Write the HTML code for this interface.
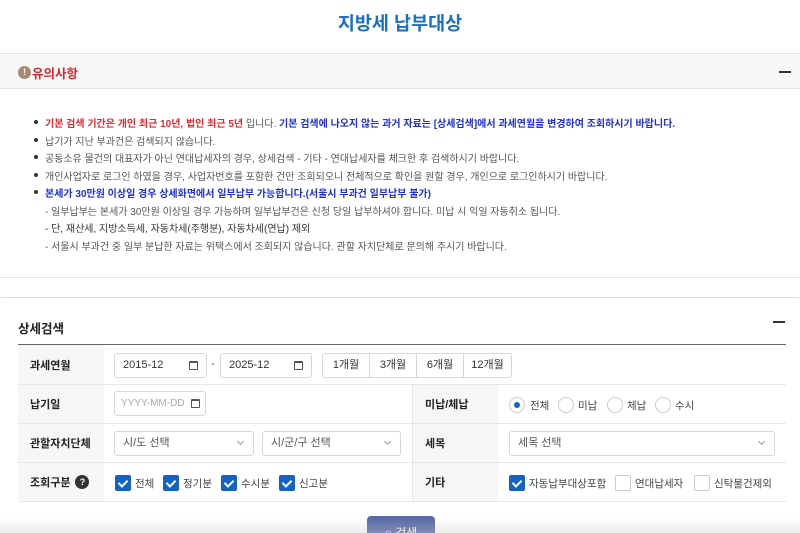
<!DOCTYPE html>
<html><head><meta charset="utf-8"><style>
*{box-sizing:border-box;margin:0;padding:0}
html,body{width:800px;height:533px;overflow:hidden}
body{background:#fff;font-family:"Liberation Sans","Noto Sans CJK KR",sans-serif;color:#333;position:relative}
.abs{position:absolute}
h1{position:absolute;top:10px;left:0;width:800px;text-align:center;font-size:18.5px;color:#1a6fc4;font-weight:bold}
.notice{left:-2px;top:53px;width:804px;height:225px;border:1px solid #e3e3e3;border-radius:4px}
.nh{height:35px;background:#f8f8f9;border-bottom:1px solid #e3e3e3;position:relative}
.nh span{position:absolute;left:33px;top:9px;font-size:12.5px;font-weight:bold;color:#d9232d}
.warn{position:absolute;left:19px;top:12px;width:13px;height:13px;border-radius:50%;background:#a88a6e;color:#fff;font-size:9px;font-weight:bold;text-align:center;line-height:13px}
.minus{position:absolute;right:10px;width:12px;height:1.5px;background:#333}
.ln{position:absolute;left:45px;font-size:10px;white-space:nowrap;color:#555}
.dot{position:absolute;left:-11px;top:5px;width:4px;height:4px;border-radius:50%;background:#333}
.red{color:#e8262e;font-weight:bold}.blue{color:#1f2fd6;font-weight:bold}
.det{left:-2px;top:297px;width:804px;height:260px;border:1px solid #ddd;border-radius:5px}
.tbl{left:18px;top:344px;width:768px;height:157px;border-top:1.5px solid #666}
.row{position:absolute;left:0;width:768px;border-bottom:1px solid #e6e6e6}
.lab{position:absolute;top:0;height:100%;background:#f6f6f7;font-size:11px;font-weight:bold;color:#222;padding-left:12px;display:flex;align-items:center}
.inp{position:absolute;height:25px;border:1px solid #d8d8d8;border-radius:3px;font-size:11px;color:#333;padding-left:8px;line-height:23px;background:#fff;white-space:nowrap}
.cal{position:absolute;right:8px;top:7px;width:9px;height:9px;border:1px solid #555;border-radius:1px;border-top-width:2px}
.chev{position:absolute;right:10px;top:7px;width:5px;height:5px;border-right:1px solid #999;border-bottom:1px solid #999;transform:rotate(45deg)}
.cb{position:absolute;width:16px;height:16px;border-radius:2px;background:#1463c4}
.cb:after{content:"";position:absolute;left:5px;top:2.5px;width:4px;height:7px;border-right:2px solid #fff;border-bottom:2px solid #fff;transform:rotate(45deg)}
.cbo{position:absolute;width:16px;height:16px;border-radius:2px;border:1px solid #ccc}
.t{position:absolute;font-size:10.5px;color:#444;white-space:nowrap}
.rad{position:absolute;width:16px;height:16px;border-radius:50%;border:1px solid #ccc;background:#fff}
.rad.on:after{content:"";position:absolute;left:4px;top:4px;width:6px;height:6px;border-radius:50%;background:#1463c4}
.btn{left:367px;top:516px;width:68px;height:30px;background:#5a6aa5;border-radius:4px;color:#fff;font-size:12px;text-align:center;padding-top:8px}
</style></head><body>
<h1>지방세 납부대상</h1>
<div class="abs notice">
 <div class="nh"><div class="warn">!</div><span>유의사항</span><div class="minus" style="top:17px"></div></div>
</div>
<div class="ln" style="top:115px"><i class="dot"></i><span class="red">기본 검색 기간은 개인 최근 10년, 법인 최근 5년</span> 입니다. <span class="blue">기본 검색에 나오지 않는 과거 자료는 [상세검색]에서 과세연월을 변경하여 조회하시기 바랍니다.</span></div>
<div class="ln" style="top:133px"><i class="dot"></i>납기가 지난 부과건은 검색되지 않습니다.</div>
<div class="ln" style="top:150px"><i class="dot"></i>공동소유 물건의 대표자가 아닌 연대납세자의 경우, 상세검색 - 기타 - 연대납세자를 체크한 후 검색하시기 바랍니다.</div>
<div class="ln" style="top:168px"><i class="dot"></i>개인사업자로 로그인 하였을 경우, 사업자번호를 포함한 건만 조회되오니 전체적으로 확인을 원할 경우, 개인으로 로그인하시기 바랍니다.</div>
<div class="ln" style="top:185px"><i class="dot"></i><span class="blue">본세가 30만원 이상일 경우 상세화면에서 일부납부 가능합니다.(서울시 부과건 일부납부 불가)</span></div>
<div class="ln" style="top:203px">- 일부납부는 본세가 30만원 이상일 경우 가능하며 일부납부건은 신청 당일 납부하셔야 합니다. 미납 시 익일 자동취소 됩니다.</div>
<div class="ln" style="top:220px;color:#333">- 단, 재산세, 지방소득세, 자동차세(주행분), 자동차세(연납) 제외</div>
<div class="ln" style="top:238px">- 서울시 부과건 중 일부 분납한 자료는 위택스에서 조회되지 않습니다. 관할 자치단체로 문의해 주시기 바랍니다.</div>

<div class="abs det"></div>
<div class="abs" style="left:18px;top:318px;font-size:12.5px;font-weight:bold;color:#222">상세검색</div>
<div class="abs minus" style="left:773px;top:321px"></div>
<div class="abs tbl">
 <div class="row" style="top:0;height:40px"><div class="lab" style="left:0;width:86px">과세연월</div>
  <div class="inp" style="left:96px;top:8px;width:93px">2015-12<i class="cal"></i></div>
  <div class="t" style="left:193px;top:13px">-</div>
  <div class="inp" style="left:202px;top:8px;width:92px">2025-12<i class="cal"></i></div>
  <div class="inp" style="left:304px;top:8px;width:190px;padding:0;display:flex">
   <span style="width:47px;text-align:center;border-right:1px solid #d8d8d8">1개월</span><span style="width:47px;text-align:center;border-right:1px solid #d8d8d8">3개월</span><span style="width:47px;text-align:center;border-right:1px solid #d8d8d8">6개월</span><span style="width:47px;text-align:center">12개월</span></div>
 </div>
 <div class="row" style="top:40px;height:39px"><div class="lab" style="left:0;width:86px">납기일</div>
  <div class="inp" style="left:96px;top:6px;width:92px;color:#aaa;font-size:10px;padding-left:6px">YYYY-MM-DD<i class="cal" style="right:5px"></i></div>
  <div class="lab" style="left:394px;width:86px;border-left:1px solid #e6e6e6">미납/체납</div>
  <div class="rad on" style="left:491px;top:12px"></div><div class="t" style="left:512px;top:13px">전체</div>
  <div class="rad" style="left:540px;top:12px"></div><div class="t" style="left:560px;top:13px">미납</div>
  <div class="rad" style="left:589px;top:12px"></div><div class="t" style="left:609px;top:13px">체납</div>
  <div class="rad" style="left:637px;top:12px"></div><div class="t" style="left:657px;top:13px">수시</div>
 </div>
 <div class="row" style="top:79px;height:39px"><div class="lab" style="left:0;width:86px">관할자치단체</div>
  <div class="inp" style="left:96px;top:7px;width:140px;color:#555">시/도 선택<i class="chev"></i></div>
  <div class="inp" style="left:244px;top:7px;width:139px;color:#555">시/군/구 선택<i class="chev"></i></div>
  <div class="lab" style="left:394px;width:86px;border-left:1px solid #e6e6e6">세목</div>
  <div class="inp" style="left:491px;top:7px;width:266px;color:#555">세목 선택<i class="chev"></i></div>
 </div>
 <div class="row" style="top:118px;height:39px"><div class="lab" style="left:0;width:86px">조회구분 <span style="display:inline-block;width:14px;height:14px;border-radius:50%;background:#333;color:#fff;font-size:9px;text-align:center;line-height:14px;margin-left:5px">?</span></div>
  <div class="cb" style="left:97px;top:12px"></div><div class="t" style="left:117px;top:13px">전체</div>
  <div class="cb" style="left:145px;top:12px"></div><div class="t" style="left:165px;top:13px">정기분</div>
  <div class="cb" style="left:203px;top:12px"></div><div class="t" style="left:223px;top:13px">수시분</div>
  <div class="cb" style="left:261px;top:12px"></div><div class="t" style="left:281px;top:13px">신고분</div>
  <div class="lab" style="left:394px;width:86px;border-left:1px solid #e6e6e6">기타</div>
  <div class="cb" style="left:491px;top:12px"></div><div class="t" style="left:511px;top:13px">자동납부대상포함</div>
  <div class="cbo" style="left:597px;top:12px"></div><div class="t" style="left:617px;top:13px">연대납세자</div>
  <div class="cbo" style="left:676px;top:12px"></div><div class="t" style="left:696px;top:13px">신탁물건제외</div>
 </div>
</div>
<div class="abs btn">○ 검색</div>
<div class="abs" style="left:0;top:518px;width:800px;height:15px;background:linear-gradient(rgba(255,255,255,0),rgba(200,200,205,.35))"></div>
</body></html>
